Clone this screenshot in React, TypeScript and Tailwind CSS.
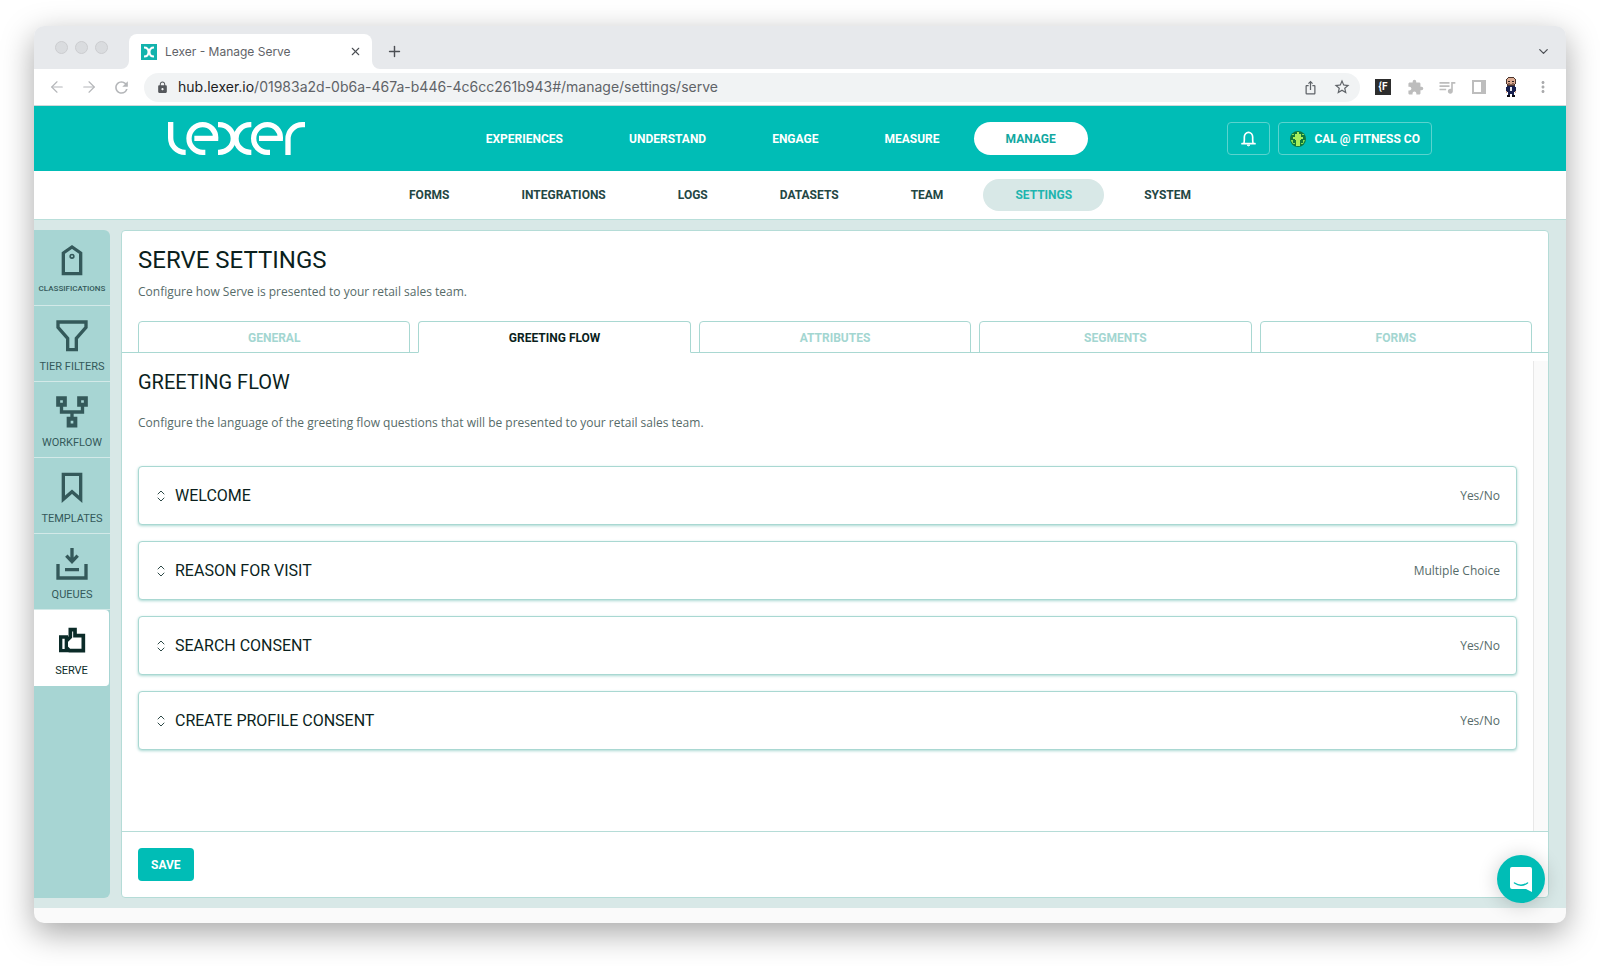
import React from 'react';
import { ArrowLeft, ArrowRight, ChevronDown, Plus, X } from 'lucide-react';
import {
  MdExtension,
  MdIosShare,
  MdLock,
  MdMoreVert,
  MdQueueMusic,
  MdRefresh,
  MdStarBorder,
} from 'react-icons/md';
import { clsx } from 'clsx';

const PRIMARY_NAV = ['Experiences', 'Understand', 'Engage', 'Measure', 'Manage'];
const SECONDARY_NAV = ['Forms', 'Integrations', 'Logs', 'Datasets', 'Team', 'Settings', 'System'];
const TABS = ['General', 'Greeting flow', 'Attributes', 'Segments', 'Forms'];

const QUESTIONS = [
  { title: 'Welcome', type: 'Yes/No' },
  { title: 'Reason for visit', type: 'Multiple Choice' },
  { title: 'Search consent', type: 'Yes/No' },
  { title: 'Create profile consent', type: 'Yes/No' },
];

/* ---------- Icons ---------- */

interface SideIconProps {
  children: React.ReactNode;
}

const SideIcon: React.FC<SideIconProps> = ({ children }) => (
  <svg viewBox="0 0 96 96" fill="none" stroke="currentColor" strokeWidth="10" className="w-8 h-8">
    {children}
  </svg>
);

const TagIcon = () => (
  <SideIcon>
    <path d="M22 89V27L48 9L74 27V89Z" />
    <circle cx="48" cy="37" r="5.500" strokeWidth="5" />
  </SideIcon>
);

const FilterIcon = () => (
  <SideIcon>
    <path d="M6 6H90V22L61 55V89H35V55L6 22Z" />
  </SideIcon>
);

const WorkflowIcon = () => (
  <SideIcon>
    <path
      d="M6.500 6.500H26.500V26.500H6.500ZM69.500 6.500H89.500V26.500H69.500ZM38 68.500H58V88.500H38Z"
      strokeWidth="12"
    />
    <path d="M16.500 30V48H79.500V30M48 48V66" />
  </SideIcon>
);

const BookmarkIcon = () => (
  <SideIcon>
    <path d="M22 7H74V82L48 59L22 82Z" />
  </SideIcon>
);

const QueueIcon = () => (
  <SideIcon>
    <path d="M6 48V90H90V48M27 65H69M48 0V39M31 23L48 41L65 23" />
  </SideIcon>
);

const ThumbIcon = () => (
  <SideIcon>
    <path d="M14 39H31V80H14Z" />
    <path d="M31 51L43 39V17H57V35H82V80H40L31 71" strokeWidth="11" />
  </SideIcon>
);

const BellIcon = () => (
  <svg
    viewBox="0 0 45 48"
    fill="none"
    stroke="white"
    strokeWidth="5"
    strokeLinecap="round"
    strokeLinejoin="round"
    className="w-[15px] h-4"
  >
    <path d="M3 38H42M8 38C10 35 10 32 10 26V18A12.500 14 0 0 1 35 18V26C35 32 35 35 37 38" />
    <path d="M19 43A4 3 0 0 0 26 43Z" fill="white" strokeWidth="3" />
  </svg>
);

const LexerLogo = () => (
  <svg
    viewBox="0 0 411 99"
    fill="none"
    stroke="white"
    strokeWidth="16"
    className="w-[137px] h-[33px]"
    role="img"
    aria-label="Lexer"
  >
    <path d="M8 0V48A43 43 0 0 0 51 91H53" />
    <path d="M112 91H104A41.500 41.500 0 0 1 63 49A41.500 41.500 0 0 1 104 8A39 39 0 0 1 143 49H79" />
    <path d="M150 8H153A43 41.500 0 0 1 196 49.500A43 41.500 0 0 1 153 91H150" />
    <path d="M250 8H247A43 41.500 0 0 0 204 49.500A43 41.500 0 0 0 247 91H250" />
    <path d="M306 91H298A41.500 41.500 0 0 1 257 49A41.500 41.500 0 0 1 298 8A39 39 0 0 1 337 49H273" />
    <path d="M360 99V51A43 43 0 0 1 403 8H411" />
  </svg>
);

const Favicon = () => (
  <svg viewBox="0 0 16 16" className="w-4 h-4 shrink-0">
    <rect width="16" height="16" fill="#12b3ad" />
    <path
      d="M3 3.500C6 3.500 7.500 5 7.500 8S6 12.500 3 12.500M13 3.500C10 3.500 8.500 5 8.500 8S10 12.500 13 12.500"
      fill="none"
      stroke="white"
      strokeWidth="2"
    />
  </svg>
);

const SidePanelIcon = () => (
  <svg viewBox="0 0 14 14" className="w-[14px] h-[14px]">
    <path d="M0 0H14V14H0ZM2 2V12H9V2Z" fill="#bdbdbd" fillRule="evenodd" />
  </svg>
);

const AvatarIcon = () => (
  <svg viewBox="0 0 12 20" shapeRendering="crispEdges" className="w-3 h-5">
    <path d="M3 0H9V1H10V2H11V7H10V9H2V7H1V2H2V1H3Z" fill="#4a342d" />
    <path d="M3 1H9V2H10V7H9V8H3V7H2V2H3Z" fill="#dcab92" />
    <path d="M3 4H5V5H3ZM7 4H9V5H7Z" fill="#2b2020" />
    <path d="M3 6H9V8H3Z" fill="#8a6455" />
    <path d="M5 6H7V7H5Z" fill="#dcab92" />
    <path d="M2 9H10V10H11V15H9V18H7V17H5V18H3V15H1V10H2Z" fill="#17204f" />
    <path d="M5 10H7V14H5Z" fill="#e6e9f2" />
    <path d="M1 14H2V16H1ZM10 14H11V16H10Z" fill="#dcab92" />
    <path d="M2 18H5V20H2ZM7 18H10V20H7Z" fill="#0d0d14" />
  </svg>
);

const AccountIcon = () => (
  <svg viewBox="0 0 16 16" className="w-4 h-4 shrink-0">
    <circle cx="8" cy="8" r="8" fill="#0f7a3c" />
    <path d="M5 3H7V1H9V3H11V6H13V8H11V9H10V15H6V9H5V8H3V6H5Z" fill="#a6ee5c" />
    <path d="M1 9H3V12H5V13H3L1 10ZM13 9H15L13 13H11V12H13ZM2 3H4V4H2ZM12 3H14V4H12Z" fill="#86e055" />
  </svg>
);

const SortIcon = () => (
  <svg
    viewBox="0 0 8 12"
    fill="none"
    stroke="#2f4a48"
    strokeLinecap="round"
    strokeLinejoin="round"
    className="w-2 h-3 shrink-0"
  >
    <path d="M1 4L4 1L7 4M1 8L4 11L7 8" />
  </svg>
);

const MessengerIcon = () => (
  <svg viewBox="0 0 22 25" className="w-[22px] h-[25px]">
    <path d="M2 0H20Q22 0 22 2V25L16 22H2Q0 22 0 20V2Q0 0 2 0Z" fill="white" />
    <path
      d="M4.500 16Q11 20.500 17.500 16"
      fill="none"
      stroke="#00bdb6"
      strokeWidth="1.500"
      strokeLinecap="round"
    />
  </svg>
);

/* ---------- Browser chrome ---------- */

interface ToolButtonProps {
  label: string;
  className?: string;
  children: React.ReactNode;
}

const ToolButton: React.FC<ToolButtonProps> = ({ label, className, children }) => (
  <button
    type="button"
    aria-label={label}
    className={clsx('w-8 h-7 flex items-center justify-center shrink-0', className)}
  >
    {children}
  </button>
);

const TabStrip = () => (
  <div className="h-[43px] bg-[#e7e9ec] flex items-end justify-between pr-[7px] shrink-0">
    <div className="flex items-end">
      <div className="flex items-center gap-[7px] h-[43px] pl-[21px] pr-[13px]">
        <span className="w-[13px] h-[13px] rounded-full bg-[#dadcdf] border border-[#cccdd0]" />
        <span className="w-[13px] h-[13px] rounded-full bg-[#dadcdf] border border-[#cccdd0]" />
        <span className="w-[13px] h-[13px] rounded-full bg-[#dadcdf] border border-[#cccdd0]" />
      </div>
      <svg viewBox="0 0 8 8" className="w-2 h-2">
        <path d="M8 0A8 8 0 0 1 0 8H8Z" fill="white" />
      </svg>
      <div className="w-[243px] h-[35px] bg-white rounded-t-lg flex items-center pl-3 pr-2 gap-2">
        <Favicon />
        <span className="flex-1 font-['Inter',sans-serif] text-xs text-[#5f6368]">
          Lexer - Manage Serve
        </span>
        <button type="button" aria-label="Close tab" className="p-0.5">
          <X size={13} color="#4c4f54" />
        </button>
      </div>
      <svg viewBox="0 0 8 8" className="w-2 h-2">
        <path d="M0 0A8 8 0 0 0 8 8H0Z" fill="white" />
      </svg>
      <button type="button" aria-label="New tab" className="h-[35px] px-1.5">
        <Plus size={17} color="#4c4f54" />
      </button>
    </div>
    <ToolButton label="Search tabs" className="h-[35px]">
      <ChevronDown size={15} color="#4c4f54" />
    </ToolButton>
  </div>
);

const Toolbar = () => (
  <div className="h-[37px] bg-white border-b border-[#cfd8d9] flex items-center px-[7px] shrink-0">
    <ToolButton label="Back">
      <ArrowLeft size={18} strokeWidth={1.500} color="#b4b6b9" />
    </ToolButton>
    <ToolButton label="Forward">
      <ArrowRight size={18} strokeWidth={1.500} color="#b4b6b9" />
    </ToolButton>
    <ToolButton label="Reload">
      <MdRefresh size={19} color="#b4b6b9" />
    </ToolButton>
    <div className="flex-1 h-[29px] mx-[7px] pl-3 pr-0.5 bg-[#f1f3f4] rounded-full flex items-center">
      <MdLock size={13} color="#55585c" className="shrink-0" />
      <div className="flex-1 flex pl-[9px] font-['Inter',sans-serif] text-sm text-[#5f6368]">
        <label htmlFor="address" className="text-[#1c1d1f]">
          hub.lexer.io
        </label>
        <input
          id="address"
          type="text"
          defaultValue="/01983a2d-0b6a-467a-b446-4c6cc261b943#/manage/settings/serve"
          className="flex-1 min-w-0 bg-transparent outline-none"
        />
      </div>
      <ToolButton label="Share">
        <MdIosShare size={15} color="#5f6368" />
      </ToolButton>
      <ToolButton label="Bookmark this page">
        <MdStarBorder size={18} color="#5f6368" />
      </ToolButton>
    </div>
    <ToolButton label="Format extension">
      <span className="w-4 h-4 bg-[#2d2d2d] text-white font-['Roboto',sans-serif] font-bold text-[10px] leading-4">
        {'{F'}
      </span>
    </ToolButton>
    <ToolButton label="Extensions">
      <MdExtension size={17} color="#bdbdbd" />
    </ToolButton>
    <ToolButton label="Media controls">
      <MdQueueMusic size={20} color="#bdbdbd" />
    </ToolButton>
    <ToolButton label="Side panel">
      <SidePanelIcon />
    </ToolButton>
    <ToolButton label="Profile">
      <AvatarIcon />
    </ToolButton>
    <ToolButton label="More">
      <MdMoreVert size={18} color="#aaabad" />
    </ToolButton>
  </div>
);

/* ---------- App header ---------- */

const Header = () => (
  <header className="bg-[#00bdb6] h-[65px] shrink-0">
    <div className="max-w-[1264px] h-full mx-auto flex items-center justify-between">
      <a href="#home" className="w-[146px]">
        <LexerLogo />
      </a>
      <nav className="flex gap-0.5">
        {PRIMARY_NAV.map((item) => (
          <a
            key={item}
            href={`#${item}`}
            className={clsx(
              'h-[33px] px-8 rounded-full flex items-center uppercase text-xs font-bold',
              item === 'Manage' ? 'bg-white text-[#12a8a1]' : 'text-white'
            )}
          >
            {item}
          </a>
        ))}
      </nav>
      <div className="flex gap-2">
        <button
          type="button"
          aria-label="Notifications"
          className="w-[43px] h-[33px] border border-[#5bd3ce] rounded flex items-center justify-center"
        >
          <BellIcon />
        </button>
        <button
          type="button"
          className="h-[33px] px-[11px] border border-[#5bd3ce] rounded flex items-center gap-2 text-white text-xs font-bold uppercase"
        >
          <AccountIcon />
          Cal @ Fitness Co
        </button>
      </div>
    </div>
  </header>
);

const SubNav = () => (
  <nav className="h-[49px] bg-white border-b border-[#b9dfda] flex items-center justify-center gap-2 shrink-0">
    {SECONDARY_NAV.map((item) => (
      <a
        key={item}
        href={`#${item}`}
        className={clsx(
          'h-8 px-8 rounded-full flex items-center uppercase text-xs font-bold',
          item === 'Settings' ? 'bg-[#d8e8e7] text-[#1fb5af]' : 'text-[#244744]'
        )}
      >
        {item}
      </a>
    ))}
  </nav>
);

const SIDE_ITEMS = [
  { label: 'Classifications', Icon: TagIcon, small: true },
  { label: 'Tier filters', Icon: FilterIcon },
  { label: 'Workflow', Icon: WorkflowIcon },
  { label: 'Templates', Icon: BookmarkIcon },
  { label: 'Queues', Icon: QueueIcon },
  { label: 'Serve', Icon: ThumbIcon, active: true },
];

const Sidebar = () => (
  <aside className="w-[76px] bg-[#a7d5d3] rounded-r-md overflow-hidden shrink-0">
    {SIDE_ITEMS.map(({ label, Icon, small, active }) => (
      <a
        key={label}
        href={`#${label}`}
        className={clsx(
          'h-[76px] pt-3.5 flex flex-col items-center border-b uppercase whitespace-nowrap',
          small ? 'gap-[5px] text-[8px] font-medium' : 'gap-[7px] text-[11px]',
          active
            ? 'mr-px bg-white border-white text-[#0b2b28] rounded-r'
            : 'border-[#d3e9e8] text-[#34595a]'
        )}
      >
        <Icon />
        <span className="leading-4">{label}</span>
      </a>
    ))}
  </aside>
);

/* ---------- Settings panel ---------- */

interface QuestionCardProps {
  title: string;
  type: string;
}

const QuestionCard: React.FC<QuestionCardProps> = ({ title, type }) => (
  <button
    type="button"
    className="w-full h-[59px] px-4 pl-[18px] flex items-center bg-white border border-[#a9d8d2] rounded shadow-[0_1px_3px_#a9d8d2]"
  >
    <SortIcon />
    <span className="ml-2.5 flex-1 text-left text-base text-[#0b1f1d] uppercase">{title}</span>
    <span className="font-['Open_Sans',sans-serif] text-xs text-[#566b69]">{type}</span>
  </button>
);

const SettingsPanel = () => (
  <main className="flex-1 min-w-0 bg-white border border-[#b5dcd7] rounded flex flex-col">
    <div className="px-4 pt-[13px]">
      <h1 className="text-2xl text-[#0b1f1d] uppercase">Serve settings</h1>
      <p className="mt-1.5 font-['Open_Sans',sans-serif] text-xs leading-5 text-[#566b69]">
        Configure how Serve is presented to your retail sales team.
      </p>
    </div>

    <div role="tablist" className="mt-[19px] px-4 flex gap-2 border-b border-[#a9d8d2]">
      {TABS.map((tab) => {
        const active = tab === 'Greeting flow';
        return (
          <button
            key={tab}
            type="button"
            role="tab"
            aria-selected={active}
            className={clsx(
              'flex-1 h-8 -mb-px pt-0.5 border border-[#a9d8d2] rounded-t text-xs font-bold uppercase',
              active ? 'border-b-white text-[#0b1f1d]' : 'text-[#a3d6d1]'
            )}
          >
            {tab}
          </button>
        );
      })}
    </div>

    <div className="flex-1 min-h-0 pt-2 flex">
      <div className="flex-1 px-4 pt-[7px]">
        <h2 className="text-xl text-[#0b1f1d] uppercase">Greeting flow</h2>
        <p className="mt-[17px] font-['Open_Sans',sans-serif] text-xs leading-5 text-[#566b69]">
          Configure the language of the greeting flow questions that will be presented to your
          retail sales team.
        </p>
        <div className="mt-[33px] flex flex-col gap-4">
          {QUESTIONS.map((question) => (
            <QuestionCard key={question.title} {...question} />
          ))}
        </div>
      </div>
      {/* Scroll track */}
      <div className="w-[15px] bg-[#fafafa] border-l border-[#e8e8e8]" />
    </div>

    <div className="h-[66px] px-4 border-t border-[#b5dcd7] flex items-center">
      <button
        type="button"
        className="h-[33px] px-[13px] bg-[#00bdb6] rounded text-white text-xs font-bold uppercase"
      >
        Save
      </button>
    </div>
  </main>
);

export default function App() {
  return (
    <div className="h-screen bg-white px-[34px] pt-[26px] pb-[43px] flex font-['Roboto',sans-serif]">
      <div className="relative flex-1 min-w-0 rounded-[10px] overflow-hidden flex flex-col bg-[#fafafa] shadow-[0_10px_32px_rgba(0,0,0,0.35)]">
        <TabStrip />
        <Toolbar />
        <Header />
        <SubNav />
        <div className="flex-1 min-h-0 bg-[#d8e8e7] py-2.5 pr-[17px] flex gap-[11px]">
          <Sidebar />
          <SettingsPanel />
        </div>
        <div className="h-[15px] shrink-0" />
        <button
          type="button"
          aria-label="Open messenger"
          className="absolute right-[21px] bottom-5 w-12 h-12 rounded-full bg-[#00bdb6] flex items-center justify-center shadow-[0_2px_20px_rgba(0,0,0,0.2)]"
        >
          <MessengerIcon />
        </button>
      </div>
    </div>
  );
}
